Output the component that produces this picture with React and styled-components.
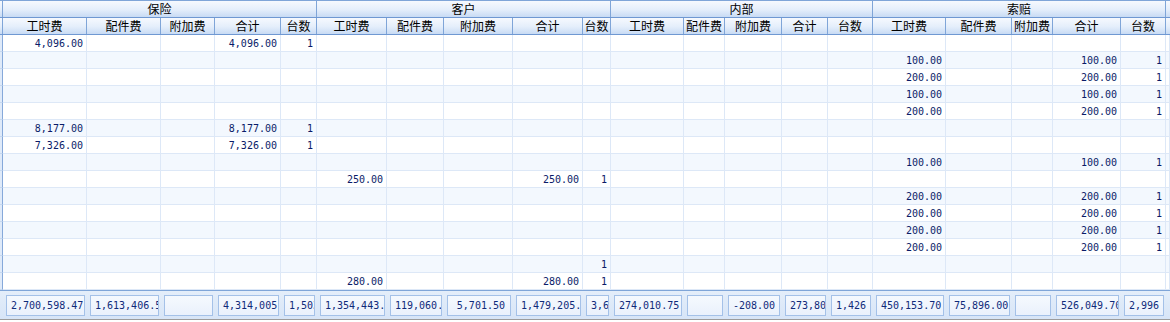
import React from "react";
import styled, { createGlobalStyle } from "styled-components";

const COLS =
  "3px 84px 74px 54px 66px 36px 70px 57px 69px 70px 28px 73px 41px 57px 46px 45px 73px 66px 41px 68px 45px 4px";

const GROUPS = ["保险", "客户", "内部", "索赔"];
const SUBS = ["工时费", "配件费", "附加费", "合计", "台数"];

const GlobalStyle = createGlobalStyle`
  body {
    margin: 0;
    background: #ffffff;
    font-family: "Noto Sans CJK SC", "Liberation Sans", sans-serif;
  }
`;

const Grid = styled.div`
  width: 1170px;
  height: 322px;
  overflow: hidden;
  display: flex;
  flex-direction: column;
  background: #ffffff;
`;

const HeadRow = styled.div`
  display: grid;
  grid-template-columns: ${COLS};
  height: ${({ $h }) => $h}px;
  background: linear-gradient(#f6f9fe 0%, #e4eefb 55%, #c8dbf4 100%);
  border-top: ${({ $top }) => ($top ? "1px solid #7fa5d8" : "none")};
  border-bottom: 1px solid #6f98d2;
  box-sizing: border-box;
`;

const HeadCell = styled.div`
  grid-column: span ${({ $span }) => $span || 1};
  border-right: 1px solid #7fa5d8;
  display: flex;
  align-items: center;
  justify-content: center;
  font-size: 12px;
  line-height: 1;
  color: #000000;
  white-space: nowrap;
  overflow: hidden;
  &:last-child {
    border-right: none;
  }
`;

const Body = styled.div`
  display: flex;
  flex-direction: column;
`;

const DataRow = styled.div`
  display: grid;
  grid-template-columns: ${COLS};
  height: 17px;
  background: ${({ $alt }) => ($alt ? "#f3f8fe" : "#ffffff")};
`;

const Strip = styled.div`
  background: #dfeaf9;
  border-right: 1px solid #86a9da;
  border-bottom: 1px solid #c6d8f0;
`;

const Cell = styled.div`
  box-sizing: border-box;
  border-right: 1px solid #dde8f7;
  border-bottom: 1px solid #dde8f7;
  padding-right: 3px;
  display: flex;
  align-items: center;
  justify-content: flex-end;
  font-family: "DejaVu Sans Mono", "Liberation Mono", monospace;
  font-size: 10px;
  color: #0a1b68;
  white-space: nowrap;
  overflow: hidden;
`;

const Footer = styled.div`
  display: grid;
  grid-template-columns: ${COLS};
  height: 30px;
  box-sizing: border-box;
  border-top: 1px solid #7fa5d8;
  border-bottom: 1px solid #9c9c9c;
  background: linear-gradient(#e4eefa, #d7e5f7);
  padding-top: 4px;
  padding-bottom: 3px;
`;

const FootCell = styled.div`
  padding: 0 2px 0 3px;
  display: flex;
`;

const SumBox = styled.div`
  flex: 1;
  min-width: 0;
  box-sizing: border-box;
  border: 1px solid #a4c1e8;
  background: linear-gradient(#f5f9fe, #eaf1fc);
  padding: 0 5px 0 4px;
  font-family: "DejaVu Sans Mono", "Liberation Mono", monospace;
  font-size: 10px;
  line-height: 19px;
  color: #0f2a7a;
  text-align: right;
  white-space: nowrap;
  overflow: hidden;
`;

const row = (g, labor, total, count) => {
  const r = Array(20).fill("");
  r[g * 5] = labor;
  r[g * 5 + 3] = total;
  r[g * 5 + 4] = count;
  return r;
};

const ROWS = [
  row(0, "4,096.00", "4,096.00", "1"),
  row(3, "100.00", "100.00", "1"),
  row(3, "200.00", "200.00", "1"),
  row(3, "100.00", "100.00", "1"),
  row(3, "200.00", "200.00", "1"),
  row(0, "8,177.00", "8,177.00", "1"),
  row(0, "7,326.00", "7,326.00", "1"),
  row(3, "100.00", "100.00", "1"),
  row(1, "250.00", "250.00", "1"),
  row(3, "200.00", "200.00", "1"),
  row(3, "200.00", "200.00", "1"),
  row(3, "200.00", "200.00", "1"),
  row(3, "200.00", "200.00", "1"),
  row(1, "", "", "1"),
  row(1, "280.00", "280.00", "1"),
];

const TOTALS = [
  "2,700,598.47", "1,613,406.53", "", "4,314,005.00", "1,503",
  "1,354,443.20", "119,060.80", "5,701.50", "1,479,205.50", "3,612",
  "274,010.75", "", "-208.00", "273,802.75", "1,426",
  "450,153.70", "75,896.00", "", "526,049.70", "2,996",
];

const App = () => {
  return (
    <>
      <GlobalStyle />
      <Grid>
        <HeadRow $h={18} $top>
          <HeadCell />
          {GROUPS.map((g) => (
            <HeadCell key={g} $span={5}>
              {g}
            </HeadCell>
          ))}
          <HeadCell />
        </HeadRow>
        <HeadRow $h={17}>
          <HeadCell />
          {GROUPS.map((g) =>
            SUBS.map((s) => <HeadCell key={g + s}>{s}</HeadCell>)
          )}
          <HeadCell />
        </HeadRow>
        <Body>
          {ROWS.map((r, i) => (
            <DataRow key={i} $alt={i % 2 === 1}>
              <Strip />
              {r.map((v, j) => (
                <Cell key={j}>{v}</Cell>
              ))}
              <Cell />
            </DataRow>
          ))}
        </Body>
        <Footer>
          <div />
          {TOTALS.map((v, j) => (
            <FootCell key={j}>
              <SumBox>{v}</SumBox>
            </FootCell>
          ))}
          <div />
        </Footer>
      </Grid>
    </>
  );
};

export default App;
